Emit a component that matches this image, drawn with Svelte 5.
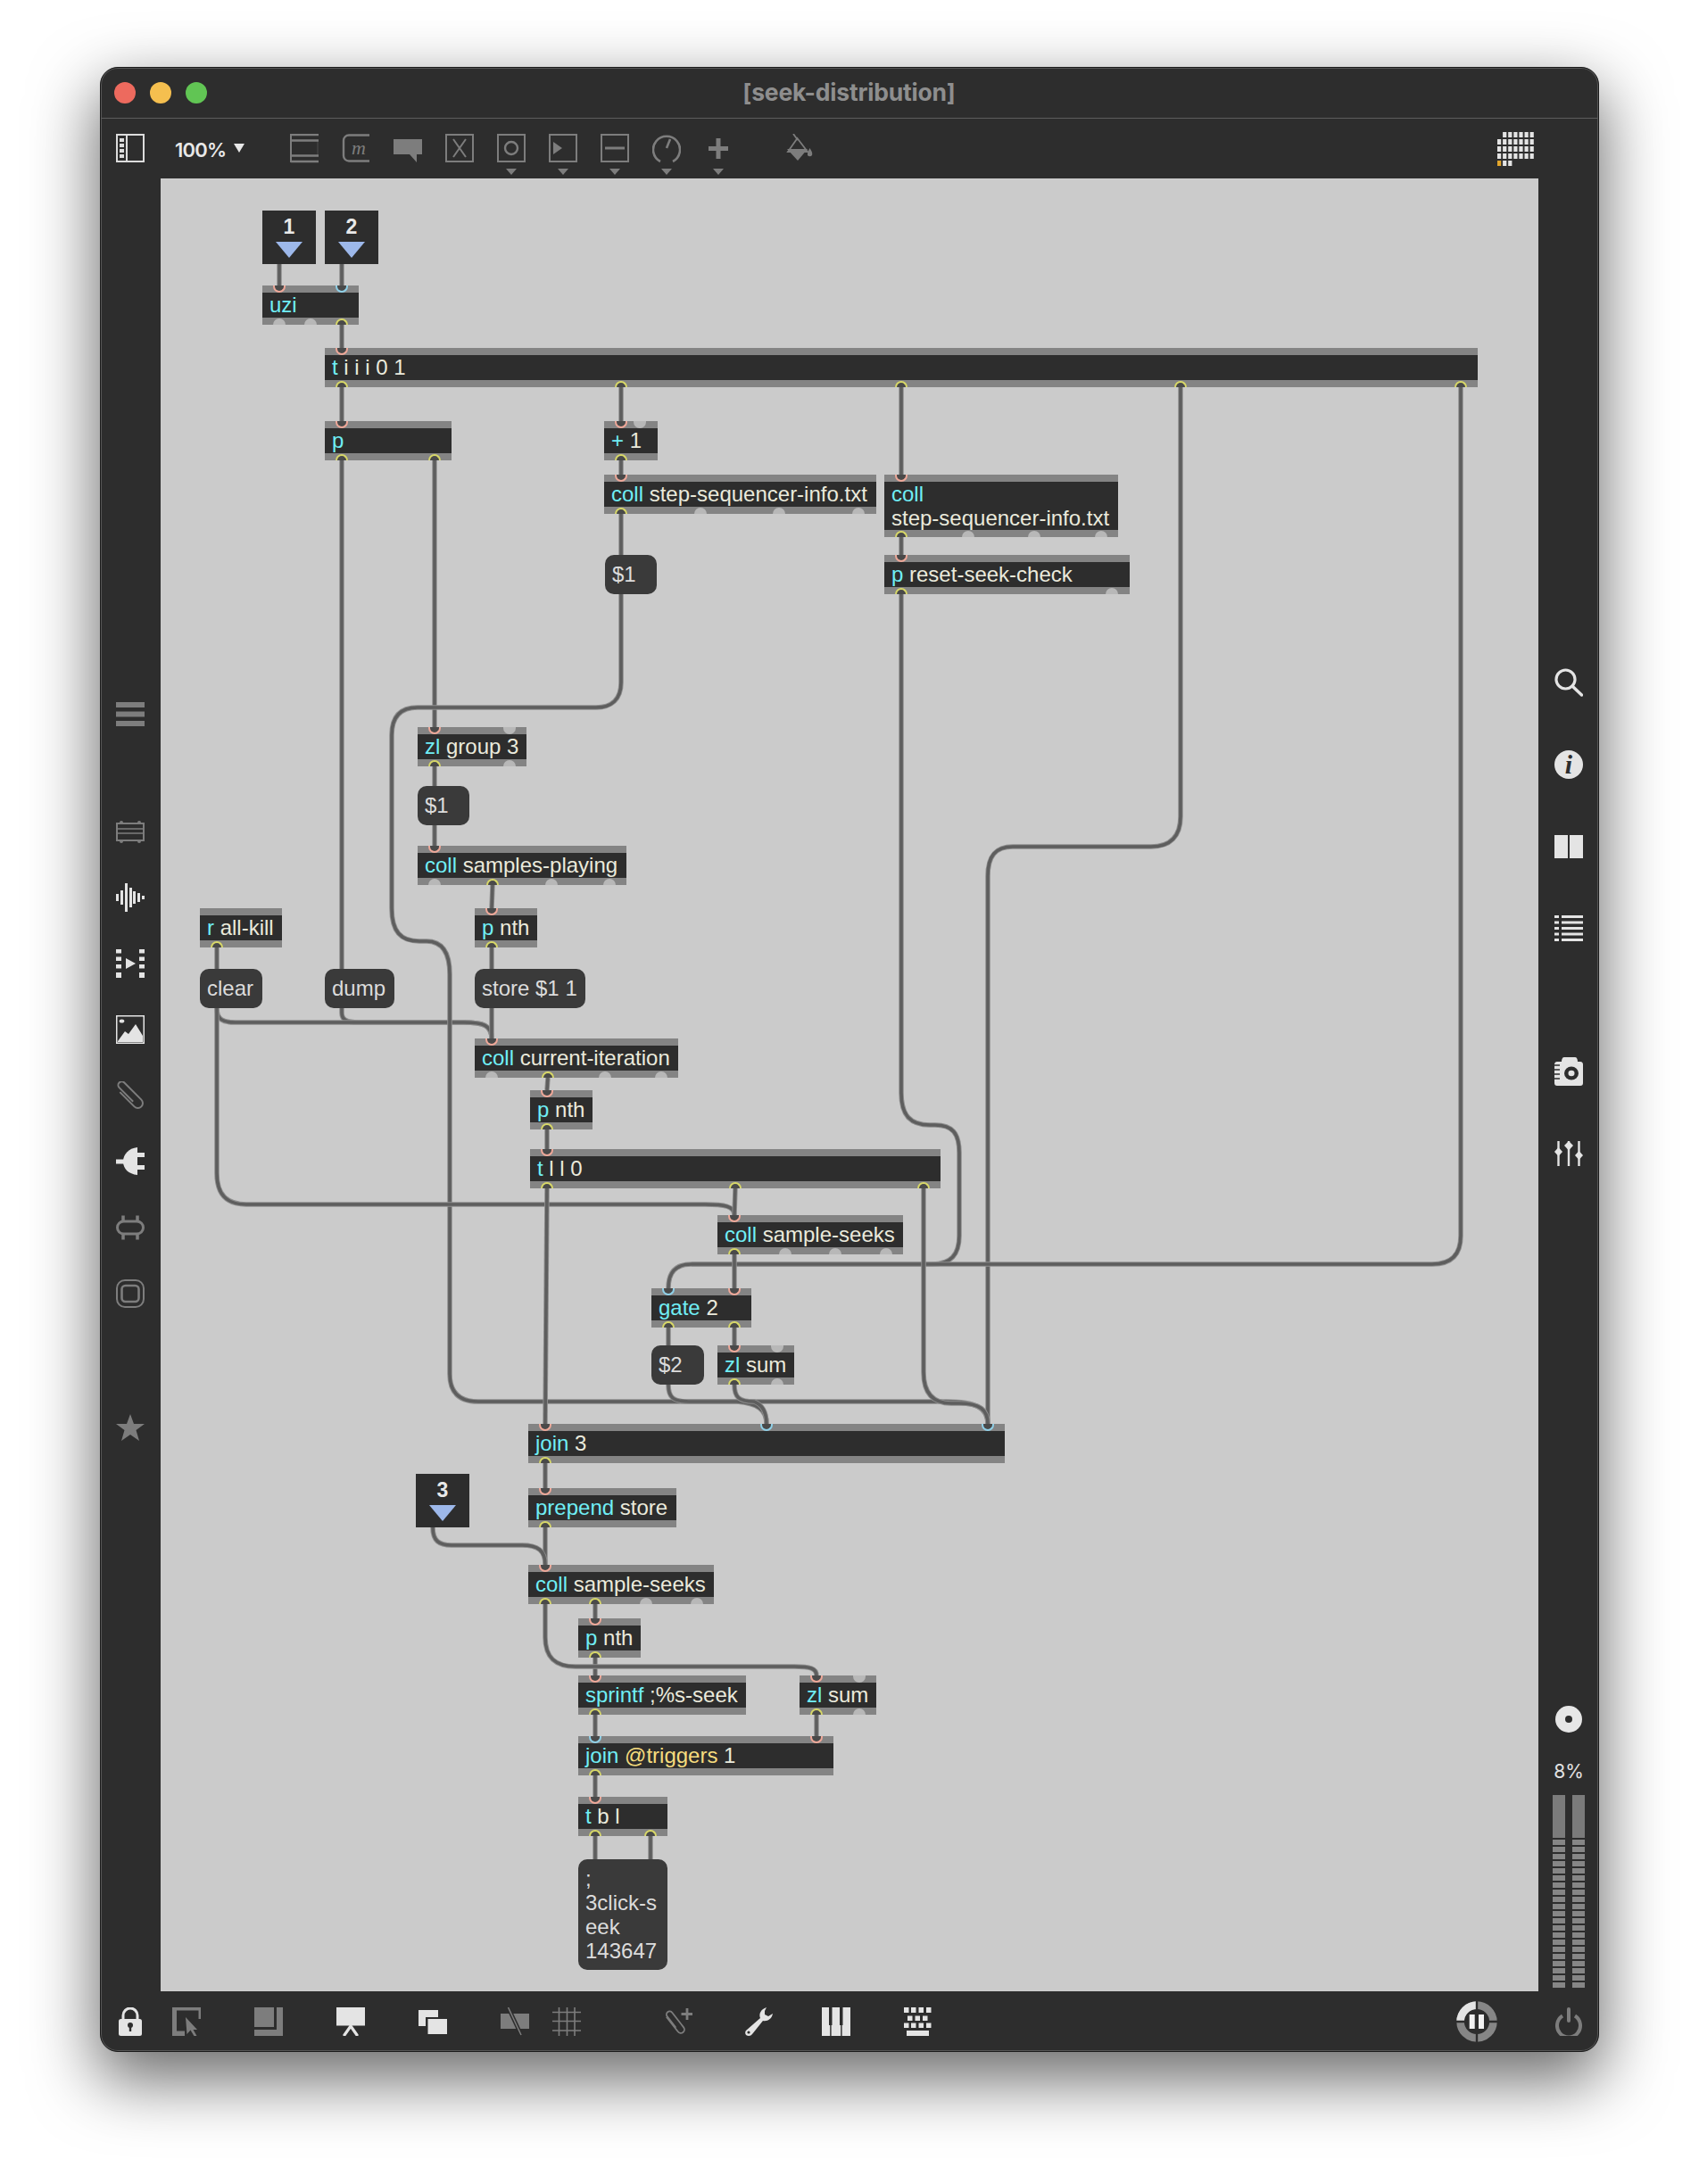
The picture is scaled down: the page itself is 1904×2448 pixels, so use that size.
<script>
  const OX = 180, OY = 200;
  const H = 44;
  // kind: o = object box, m = message. parts: [text, colour class]
  const nodes = [
    { x: 294, y: 320, w: 108, parts: [['uzi', 'c']], ins: [[313, 'r'], [383, 'b']], outs: [[313, 'g'], [348, 'g'], [383, 'y']] },
    { x: 364, y: 390, w: 1292, parts: [['t', 'c'], [' i i i 0 1', '']], ins: [[383, 'r']], outs: [[383, 'y'], [696, 'y'], [1010, 'y'], [1323, 'y'], [1637, 'y']] },
    { x: 364, y: 472, w: 142, parts: [['p', 'c']], ins: [[383, 'r']], outs: [[383, 'y'], [487, 'y']] },
    { x: 677, y: 472, w: 60, parts: [['+', 'c'], [' 1', '']], ins: [[696, 'r'], [717, 'g']], outs: [[696, 'y']] },
    { x: 677, y: 532, w: 305, parts: [['coll', 'c'], [' step-sequencer-info.txt', '']], ins: [[696, 'r']], outs: [[696, 'y'], [785, 'g'], [873, 'g'], [962, 'g']] },
    { x: 991, y: 532, w: 262, h: 70, two: true, parts: [['coll', 'c'], ['\nstep-sequencer-info.txt', '']], ins: [[1010, 'r']], outs: [[1010, 'y'], [1085, 'g'], [1159, 'g'], [1234, 'g']] },
    { x: 991, y: 622, w: 275, parts: [['p', 'c'], [' reset-seek-check', '']], ins: [[1010, 'r']], outs: [[1010, 'y'], [1246, 'g']] },
    { x: 678, y: 622, w: 58, msg: true, parts: [['$1', '']] },
    { x: 468, y: 815, w: 122, parts: [['zl', 'c'], [' group 3', '']], ins: [[487, 'r'], [571, 'g']], outs: [[487, 'y'], [571, 'g']] },
    { x: 468, y: 881, w: 58, msg: true, parts: [['$1', '']] },
    { x: 468, y: 948, w: 234, parts: [['coll', 'c'], [' samples-playing', '']], ins: [[487, 'r']], outs: [[487, 'g'], [552, 'y'], [618, 'g'], [683, 'g']] },
    { x: 224, y: 1018, w: 92, parts: [['r', 'c'], [' all-kill', '']], ins: [], outs: [[243, 'y']] },
    { x: 532, y: 1018, w: 70, parts: [['p', 'c'], [' nth', '']], ins: [[551, 'r']], outs: [[551, 'y']] },
    { x: 224, y: 1086, w: 70, msg: true, parts: [['clear', '']] },
    { x: 364, y: 1086, w: 78, msg: true, parts: [['dump', '']] },
    { x: 532, y: 1086, w: 124, msg: true, parts: [['store $1 1', '']] },
    { x: 532, y: 1164, w: 228, parts: [['coll', 'c'], [' current-iteration', '']], ins: [[551, 'r']], outs: [[551, 'g'], [614, 'y'], [678, 'g'], [741, 'g']] },
    { x: 594, y: 1222, w: 70, parts: [['p', 'c'], [' nth', '']], ins: [[613, 'r']], outs: [[613, 'y']] },
    { x: 594, y: 1288, w: 460, parts: [['t', 'c'], [' l l 0', '']], ins: [[613, 'r']], outs: [[613, 'y'], [824, 'y'], [1035, 'y']] },
    { x: 804, y: 1362, w: 208, parts: [['coll', 'c'], [' sample-seeks', '']], ins: [[823, 'r']], outs: [[823, 'y'], [880, 'g'], [936, 'g'], [993, 'g']] },
    { x: 730, y: 1444, w: 112, parts: [['gate', 'c'], [' 2', '']], ins: [[749, 'b'], [823, 'r']], outs: [[749, 'y'], [823, 'y']] },
    { x: 730, y: 1508, w: 59, msg: true, parts: [['$2', '']] },
    { x: 804, y: 1508, w: 86, parts: [['zl', 'c'], [' sum', '']], ins: [[823, 'r'], [871, 'g']], outs: [[823, 'y'], [871, 'g']] },
    { x: 592, y: 1596, w: 534, parts: [['join', 'c'], [' 3', '']], ins: [[611, 'r'], [859, 'b'], [1107, 'b']], outs: [[611, 'y']] },
    { x: 592, y: 1668, w: 166, parts: [['prepend', 'c'], [' store', '']], ins: [[611, 'r']], outs: [[611, 'y']] },
    { x: 592, y: 1754, w: 208, parts: [['coll', 'c'], [' sample-seeks', '']], ins: [[611, 'r']], outs: [[611, 'y'], [667, 'y'], [724, 'g'], [781, 'g']] },
    { x: 648, y: 1814, w: 70, parts: [['p', 'c'], [' nth', '']], ins: [[667, 'r']], outs: [[667, 'y']] },
    { x: 648, y: 1878, w: 188, parts: [['sprintf', 'c'], [' ;%s-seek', '']], ins: [[667, 'r']], outs: [[667, 'y']] },
    { x: 896, y: 1878, w: 86, parts: [['zl', 'c'], [' sum', '']], ins: [[915, 'r'], [963, 'g']], outs: [[915, 'y'], [963, 'g']] },
    { x: 648, y: 1946, w: 286, parts: [['join', 'c'], [' @triggers', 'a'], [' 1', '']], ins: [[667, 'b'], [915, 'r']], outs: [[667, 'y']] },
    { x: 648, y: 2014, w: 100, parts: [['t', 'c'], [' b l', '']], ins: [[667, 'r']], outs: [[667, 'y'], [729, 'y']] },
    { x: 648, y: 2084, w: 100, h: 124, msg: true, two: true, parts: [[';\n3click-s\neek\n143647', '']] }
  ];

  const inlets = [
    { x: 294, y: 236, n: '1' },
    { x: 364, y: 236, n: '2' },
    { x: 466, y: 1652, n: '3' }
  ];

  const cords = [
    'M313 296V320', 'M383 296V320', 'M383 364V390', 'M383 434V472',
    'M383 516V1086',
    'M383 1130V1135C383 1143 388 1146 402 1146H520C541 1146 551 1149 551 1164',
    'M243 1130C243 1143 250 1146 264 1146H520C541 1146 551 1149 551 1164',
    'M487 516V815', 'M696 434V472', 'M696 516V532', 'M696 576V622',
    'M696 666V765C696 784 685 793 668 793H468C448 793 439 804 439 824V1018C439 1044 449 1055 470 1055H478C496 1055 504 1068 504 1092V1540C504 1561 515 1571 536 1571H1060C1094 1571 1107 1578 1107 1596',
    'M1010 434V532', 'M1010 602V622',
    'M1010 666V1225C1010 1250 1020 1261 1042 1261H1048C1067 1261 1075 1270 1075 1292V1385C1075 1407 1065 1417 1045 1417H775C757 1417 749 1426 749 1444',
    'M1323 434V915C1323 938 1311 949 1290 949H1135C1115 949 1107 960 1107 982V1596',
    'M1637 434V1385C1637 1407 1626 1417 1605 1417H775',
    'M487 859V881', 'M487 925V948', 'M552 992L551 1018', 'M551 1062V1086', 'M551 1130V1164',
    'M614 1208L613 1222', 'M613 1266V1288', 'M243 1062V1086',
    'M243 1130V1315C243 1339 254 1350 276 1350H790C812 1350 823 1352 823 1362',
    'M613 1332L611 1596', 'M824 1332L823 1362', 'M823 1406V1444', 'M749 1488V1508', 'M823 1488V1508',
    'M749 1552C749 1566 754 1571 772 1571H826C849 1573 859 1580 859 1596',
    'M823 1552C823 1566 828 1571 845 1571C853 1574 859 1582 859 1596',
    'M1035 1332V1538C1035 1561 1045 1573 1066 1573H1075C1098 1573 1107 1580 1107 1596',
    'M611 1640V1668', 'M611 1712V1754',
    'M485 1712C485 1727 492 1732 506 1732H585C603 1732 611 1738 611 1754',
    'M667 1798V1814', 'M667 1858V1878',
    'M611 1798V1835C611 1858 622 1868 645 1868H890C908 1868 915 1870 915 1878',
    'M667 1922V1946', 'M915 1922V1946', 'M667 1990V2014', 'M667 2058V2084', 'M729 2058V2084'
  ];

  const gridRows = [
    [1, 2, 3, 4, 5, 6], [0, 1, 2, 3, 4, 5, 6], [0, 1, 2, 3, 4, 5, 6], [0, 1, 2, 3, 4, 5, 6], [0, 1, 2]
  ];
  const segs = Array.from({ length: 21 }, (_, i) => i);
</script>

<div class="window">
  <header class="titlebar">
    <div class="lights">
      <span class="light red"></span>
      <span class="light amber"></span>
      <span class="light green"></span>
    </div>
    <div class="title">[seek-distribution]</div>
    <div></div>
  </header>

  <div class="toolbar">
    <svg class="tool light-ico" viewBox="0 0 32 48">
      <rect x="1" y="1" width="30" height="30" fill="none" stroke="currentColor" stroke-width="2" />
      <rect x="11" y="1" width="2" height="30" fill="currentColor" />
      <rect x="4" y="5" width="5" height="4" fill="currentColor" />
      <rect x="4" y="11" width="5" height="4" fill="currentColor" />
      <rect x="4" y="17" width="5" height="4" fill="currentColor" />
      <rect x="4" y="23" width="5" height="4" fill="currentColor" />
    </svg>
    <div class="zoomlevel">100%<span class="zoomarrow"></span></div>

    <svg class="tool first" viewBox="0 0 32 48">
      <path d="M1 0V32" stroke="currentColor" stroke-width="2" />
      <path d="M1 1H32M1 7.5H32M1 24.5H32M1 31H32" stroke="currentColor" stroke-width="2.6" />
      <path d="M31 8V24" stroke="currentColor" stroke-width="1" opacity=".4" />
    </svg>
    <svg class="tool" viewBox="0 0 32 48">
      <path d="M31 1.5H8a6 6 0 0 0-6 6v17a6 6 0 0 0 6 6h23" fill="none" stroke="currentColor" stroke-width="2.4" />
      <text x="11" y="23" class="italic-m">m</text>
    </svg>
    <svg class="tool" viewBox="0 0 32 48"><path d="M0 6H32V23H26V32L18 23H0Z" fill="currentColor" /></svg>
    <svg class="tool" viewBox="0 0 32 48">
      <rect x="1" y="1" width="30" height="30" fill="none" stroke="currentColor" stroke-width="2" />
      <path d="M9 6L23 26M23 6L9 26" stroke="currentColor" stroke-width="2" />
    </svg>
    <svg class="tool" viewBox="0 0 32 48">
      <rect x="1" y="1" width="30" height="30" fill="none" stroke="currentColor" stroke-width="2" />
      <circle cx="16" cy="16" r="7" fill="none" stroke="currentColor" stroke-width="2.4" />
      <path d="M10 39H22L16 46Z" fill="currentColor" />
    </svg>
    <svg class="tool" viewBox="0 0 32 48">
      <rect x="1" y="1" width="30" height="30" fill="none" stroke="currentColor" stroke-width="2" />
      <path d="M5 9L15 16L5 23Z" fill="currentColor" />
      <path d="M10 39H22L16 46Z" fill="currentColor" />
    </svg>
    <svg class="tool" viewBox="0 0 32 48">
      <rect x="1" y="1" width="30" height="30" fill="none" stroke="currentColor" stroke-width="2" />
      <rect x="5" y="14.5" width="22" height="3" fill="currentColor" />
      <path d="M10 39H22L16 46Z" fill="currentColor" />
    </svg>
    <svg class="tool" viewBox="0 0 32 48">
      <path d="M9 31A15 15 0 1 1 23 31" fill="none" stroke="currentColor" stroke-width="2.6" />
      <path d="M16 16L20 6" stroke="currentColor" stroke-width="2.6" />
      <path d="M10 39H22L16 46Z" fill="currentColor" />
    </svg>
    <svg class="tool" viewBox="0 0 32 48">
      <path d="M16 5V28M5 16.5H27" stroke="currentColor" stroke-width="5" />
      <path d="M10 39H22L16 46Z" fill="currentColor" />
    </svg>
    <svg class="tool bucket" viewBox="0 0 32 48">
      <path d="M9 0L14 7M13.5 5L25 20H3Z" fill="none" stroke="currentColor" stroke-width="1.8" />
      <path d="M2 17H25L14 30Z" fill="currentColor" />
      <path d="M27.5 16C29 19 31 21 30 24A3 3 0 0 1 25 24C24.5 21 26 19 27.5 16Z" fill="currentColor" />
    </svg>
    <svg class="gridicon" viewBox="0 0 41 38">
      {#each gridRows as row, r}
        {#each row as c}
          <rect x={c * 6.1} y={r * 8} width="4.2" height="6" fill={r === 4 && c === 0 ? '#e3a62c' : '#e4e4e4'} />
        {/each}
      {/each}
    </svg>
  </div>

  <div class="middle">
    <aside class="side left">
      <svg class="ico dim" viewBox="0 0 32 32">
        <rect y="3" width="32" height="6" fill="currentColor" /><rect y="13.5" width="32" height="6" fill="currentColor" /><rect y="24" width="32" height="6" fill="currentColor" />
      </svg>
      <svg class="ico dim gap-group" viewBox="0 0 32 32">
        <rect x="1" y="7" width="30" height="19" fill="none" stroke="currentColor" stroke-width="2" />
        <path d="M2 13H30M2 18H30" stroke="currentColor" stroke-width="1.5" />
        <circle cx="6" cy="6" r="2" fill="currentColor" /><circle cx="26" cy="6" r="2" fill="currentColor" />
        <circle cx="6" cy="27" r="2" fill="currentColor" /><circle cx="26" cy="27" r="2" fill="currentColor" />
      </svg>
      <svg class="ico bright" viewBox="0 0 32 32">
        <rect x="0" y="12" width="3" height="8" fill="currentColor" /><rect x="5" y="8" width="3" height="16" fill="currentColor" />
        <rect x="10" y="0" width="3" height="32" fill="currentColor" /><rect x="15" y="5" width="3" height="22" fill="currentColor" />
        <rect x="19" y="9" width="3" height="14" fill="currentColor" /><rect x="24" y="11" width="3" height="10" fill="currentColor" />
        <rect x="29" y="14" width="3" height="4" fill="currentColor" />
      </svg>
      <svg class="ico bright" viewBox="0 0 32 32">
        <path d="M0 0H6V4.5H0ZM0 8.5H6V13H0ZM0 17H6V21.5H0ZM0 26H6V32H0ZM26 0H32V4.5H26ZM26 8.5H32V13H26ZM26 17H32V21.5H26ZM26 26H32V32H26Z" fill="currentColor" />
        <path d="M11 10L22 16L11 22Z" fill="currentColor" />
      </svg>
      <svg class="ico bright" viewBox="0 0 32 32">
        <rect x=".75" y=".75" width="30.5" height="30.5" fill="none" stroke="currentColor" stroke-width="1.5" />
        <path d="M2 29L10 18L14 21L22 10L30 23V30H2Z" fill="currentColor" />
        <ellipse cx="6.5" cy="6.5" rx="2.8" ry="2" fill="currentColor" />
      </svg>
      <svg class="ico dim" viewBox="0 0 32 32">
        <g transform="rotate(-45 16 16)">
          <path d="M10.5 5V28a5.500 5.500 0 0 0 11 0V1a4 4 0 0 0-8 0V23" fill="none" stroke="currentColor" stroke-width="2" />
        </g>
      </svg>
      <svg class="ico bright" viewBox="0 0 32 32">
        <rect x="0" y="13.5" width="9" height="5" fill="currentColor" />
        <path d="M8 16C8 8 14 1 24 0V31C14 30 8 24 8 16Z" fill="currentColor" />
        <rect x="24" y="6" width="8" height="5" fill="currentColor" /><rect x="24" y="20" width="8" height="5" fill="currentColor" />
      </svg>
      <svg class="ico dim" viewBox="0 0 32 32">
        <rect x="1.5" y="9" width="29" height="14" rx="7" fill="none" stroke="currentColor" stroke-width="3" />
        <path d="M8 2.5V9M24 2.5V9M8 23V29.5M24 23V29.5" stroke="currentColor" stroke-width="3.5" />
      </svg>
      <svg class="ico dim" viewBox="0 0 32 32">
        <rect x="1" y="1" width="30" height="30" rx="9" fill="none" stroke="currentColor" stroke-width="2" />
        <rect x="6.5" y="7" width="19" height="18" rx="4" fill="none" stroke="currentColor" stroke-width="2.6" />
      </svg>
      <svg class="ico dim gap-star" viewBox="0 0 32 32">
        <path d="M16 1L20 12H32L22.5 19L26 31L16 24L6 31L9.5 19L0 12H12Z" fill="currentColor" />
      </svg>
    </aside>

    <main class="canvas">
      <svg class="cords" viewBox="{OX} {OY} 1544 2032">
        {#each cords as d}
          <path {d} class="cord-edge" />
          <path {d} class="cord" />
        {/each}
      </svg>

      {#each inlets as p}
        <div class="inlet" style="left:{p.x - OX}px;top:{p.y - OY}px">
          <span class="inlet-num">{p.n}</span>
          <span class="inlet-tri"></span>
        </div>
      {/each}

      {#each nodes as n}
        <div class="node" class:msg={n.msg} class:two={n.two}
          style="left:{n.x - OX}px;top:{n.y - OY}px;width:{n.w}px;height:{n.h ?? H}px">
          <span class="label">{#each n.parts as part}<span class={part[1]}>{part[0]}</span>{/each}</span>
          {#each n.ins ?? [] as port}
            <i class="port in {port[1]}" style="left:{port[0] - n.x - 7}px"></i>
          {/each}
          {#each n.outs ?? [] as port}
            <i class="port out {port[1]}" style="left:{port[0] - n.x - 7}px"></i>
          {/each}
        </div>
      {/each}
    </main>

    <aside class="side right">
      <svg class="ico bright" viewBox="0 0 32 32">
        <circle cx="12.5" cy="12.5" r="10.5" fill="none" stroke="currentColor" stroke-width="3.2" />
        <path d="M20 20L30.5 30" stroke="currentColor" stroke-width="3.4" stroke-linecap="round" />
      </svg>
      <svg class="ico bright" viewBox="0 0 32 32">
        <circle cx="16" cy="16" r="16" fill="currentColor" />
        <text x="16" y="26" class="info-i" text-anchor="middle">i</text>
      </svg>
      <svg class="ico bright" viewBox="0 0 32 32">
        <rect y="3" width="15" height="26" fill="currentColor" /><rect x="17" y="3" width="15" height="26" fill="currentColor" />
      </svg>
      <svg class="ico bright" viewBox="0 0 32 32">
        <path d="M0 2.5H5M8 2.5H32M0 9H5M8 9H32M0 15.5H5M8 15.5H32M0 22H5M8 22H32M0 28.500H5M8 28.500H32" stroke="currentColor" stroke-width="3" />
      </svg>
      <svg class="ico bright gap-cam" viewBox="0 0 32 32">
        <path d="M3 5H8C8 2 9 0 11 0H23C25 0 26 2 26 5H29C31 5 32 6.500 32 8V29C32 31 31 32 29 32H3C1 32 0 31 0 29V8C0 6.500 1 5 3 5Z" fill="currentColor" />
        <ellipse cx="19" cy="18" rx="8" ry="7.500" fill="#2d2d2d" />
        <ellipse cx="19" cy="18" rx="3.500" ry="3.200" fill="currentColor" />
        <path d="M0 9H6M0 14H6M0 19H6M0 24H6" stroke="#2d2d2d" stroke-width="1.500" />
      </svg>
      <svg class="ico bright" viewBox="0 0 32 32">
        <path d="M4.500 2V30M16 2V30M27.500 2V30" stroke="currentColor" stroke-width="2.400" />
        <path d="M4.500 9L9 14L4.500 19L0 14Z" fill="currentColor" />
        <path d="M16 2L21 7L16 12.500L11 7Z" fill="currentColor" />
        <path d="M27.500 13L32 18L27.500 23L23 18Z" fill="currentColor" />
      </svg>

      <div class="status">
        <svg class="disc" viewBox="0 0 30 30">
          <circle cx="15" cy="15" r="15" fill="#e6e6e6" /><circle cx="15" cy="15" r="4" fill="#2d2d2d" />
        </svg>
        <div class="cpu">8%</div>
        <div class="meters">
          {#each [0, 1] as m}
            <div class="meter">
              <div class="meter-top"></div>
              {#each segs as s (s)}<div class="seg"></div>{/each}
            </div>
          {/each}
        </div>
      </div>
    </aside>
  </div>

  <footer class="bottombar">
    <svg class="ico bright" viewBox="0 0 32 32">
      <path d="M8 14V9A8 8 0 0 1 24 9V14" fill="none" stroke="currentColor" stroke-width="3" />
      <rect x="3" y="13" width="26" height="19" rx="2.500" fill="currentColor" />
      <circle cx="16" cy="20" r="3" fill="#2d2d2d" /><rect x="14.800" y="20" width="2.400" height="7" fill="#2d2d2d" />
    </svg>
    <svg class="ico dim ml31" viewBox="0 0 32 32">
      <path d="M0 0H32V13H29.500V3.500H5V26.500H14V32H0Z" fill="currentColor" />
      <path d="M15 11L28 25L23.500 25L27.500 32L25 33L20.500 25.500L16.500 30Z" fill="currentColor" />
    </svg>
    <svg class="ico dim ml60" viewBox="0 0 32 32">
      <rect width="22" height="22" fill="currentColor" />
      <path d="M25 0H32V32H0V25H25Z" fill="currentColor" />
    </svg>
    <svg class="ico bright ml60" viewBox="0 0 32 32">
      <rect width="32" height="20.500" fill="currentColor" />
      <path d="M16 21L9 31M16 21L23 31" stroke="currentColor" stroke-width="3.200" stroke-linecap="round" fill="none" />
    </svg>
    <svg class="ico bright ml60" viewBox="0 0 32 32">
      <rect y="3" width="22" height="18" fill="currentColor" />
      <rect x="8" y="11" width="25" height="20.500" fill="#2d2d2d" />
      <rect x="10.500" y="13" width="21.500" height="17" fill="currentColor" />
    </svg>
    <svg class="ico dim ml60" viewBox="0 0 32 32">
      <rect y="7" width="32" height="17" fill="currentColor" />
      <path d="M8.500 0L23 31" stroke="#2d2d2d" stroke-width="4.500" />
      <path d="M8.500 0L23 31" stroke="currentColor" stroke-width="1.500" />
    </svg>
    <svg class="ico dim ml26" viewBox="0 0 32 32">
      <path d="M7.500 0V32M16.500 0V32M25 0V32M0 5.500H32M0 15.500H32M0 26H32" stroke="currentColor" stroke-width="1.600" />
    </svg>
    <svg class="ico dim ml93" viewBox="0 0 32 32">
      <g transform="rotate(-38 13 18)">
        <path d="M9.500 6V27a4 4 0 0 0 8 0V6a3.500 3.500 0 0 0-7 0V22" fill="none" stroke="currentColor" stroke-width="1.800" />
      </g>
      <path d="M26 1V14M19.500 7.500H32.500" stroke="currentColor" stroke-width="2.800" />
    </svg>
    <svg class="ico bright ml58" viewBox="0 0 32 32">
      <path d="M25 0C19 2 16 7 18 12L2 26C0 29 2 32 5 32C7 32 8 31 9 30L21 15C26 16 31 13 32 7L27 10L23 8L23 4Z" fill="currentColor" />
      <circle cx="5" cy="28" r="1.600" fill="#2d2d2d" />
    </svg>
    <svg class="ico bright ml55" viewBox="0 0 32 32">
      <rect width="32" height="32" fill="currentColor" />
      <rect x="8" width="3.500" height="20" fill="#2d2d2d" /><rect x="20" width="3.500" height="20" fill="#2d2d2d" />
      <rect x="9.200" y="19" width="1.400" height="13" fill="#2d2d2d" /><rect x="21.200" y="19" width="1.400" height="13" fill="#2d2d2d" />
    </svg>
    <svg class="ico bright ml60" viewBox="0 0 32 32">
      <path d="M0 0H5.500V6H0ZM8 0H13.500V6H8ZM16.500 0H22V6H16.500ZM25 0H30.500V6H25ZM4 9.500H9.500V15H4ZM12.500 9.500H18V15H12.500ZM21 9.500H26.500V15H21ZM0 17.500H5.500V23H0ZM8 17.500H13.500V23H8ZM16.500 17.500H22V23H16.500ZM25 17.500H30.500V23H25ZM3 26H28V32H3Z" fill="currentColor" />
    </svg>

    <svg class="ring" viewBox="0 0 46 46">
      <circle cx="23" cy="23" r="18.400" fill="none" stroke="#868686" stroke-width="8.600" />
      <path d="M23 4.600A18.400 18.400 0 0 0 4.600 23" fill="none" stroke="#e4e4e4" stroke-width="8.600" />
      <path d="M23 0V46M0 23H46" stroke="#2d2d2d" stroke-width="2.400" />
      <rect x="14.700" y="15" width="6" height="16" fill="#f2f2f2" /><rect x="25" y="15" width="6" height="16" fill="#f2f2f2" />
    </svg>
    <svg class="ico dim power" viewBox="0 0 32 32">
      <path d="M9 9.500A13 13 0 1 0 23 9.500" fill="none" stroke="currentColor" stroke-width="4" />
      <path d="M16 2V15" stroke="currentColor" stroke-width="4" stroke-linecap="round" />
    </svg>
  </footer>
</div>

<style>
  :global(body) {
    margin: 0;
    background: #fff;
    font-family: "Liberation Sans", Arial, sans-serif;
  }

  :global(#app) {
    height: 2448px;
    overflow: hidden;
    padding-top: 75px;
    box-sizing: border-box;
  }

  .window {
    width: 1680px;
    height: 2225px;
    margin-left: 112px;
    box-sizing: border-box;
    display: flex;
    flex-direction: column;
    background: #2d2d2d;
    border: 1px solid #1a1a1a;
    border-radius: 20px;
    box-shadow: 0 28px 72px 4px rgba(0, 0, 0, 0.58), inset 0 0 0 1px #555;
    color: #7d7d7d;
  }

  .titlebar {
    height: 57px;
    box-sizing: border-box;
    flex: none;
    display: grid;
    grid-template-columns: 1fr auto 1fr;
    align-items: center;
    border-bottom: 1px solid #5c5c5c;
    padding-left: 15px;
  }

  .lights {
    display: flex;
    gap: 16px;
  }

  .light {
    width: 24px;
    height: 24px;
    border-radius: 50%;
  }

  .red { background: #ed6a5e; }
  .amber { background: #f5bf4f; }
  .green { background: #61c554; }

  .title {
    font-family: Inter, "Liberation Sans", sans-serif;
    font-weight: 700;
    font-size: 26.500px;
    letter-spacing: -0.2px;
    color: #8e8e8e;
    line-height: 50px;
    margin-top: -3px;
    transform: translateX(-8px);
  }

  .toolbar {
    height: 67px;
    flex: none;
    box-sizing: border-box;
    display: flex;
    align-items: flex-start;
    padding: 17px 0 0 17px;
  }

  .tool {
    width: 32px;
    height: 48px;
    flex: none;
    margin-right: 26px;
  }

  .tool.light-ico {
    color: #dcdcdc;
    margin-right: 34px;
  }

  .tool.first { margin-left: 36px; }
  .tool.bucket { margin-left: 33px; }

  .italic-m {
    font-family: "Liberation Serif", serif;
    font-style: italic;
    font-size: 22px;
    fill: currentColor;
  }

  .zoomlevel {
    font-family: Inter, "Liberation Sans", sans-serif;
    font-size: 22px;
    font-weight: 600;
    color: #e8e8e8;
    line-height: 36px;
    letter-spacing: -0.8px;
    display: flex;
    align-items: center;
    width: 93px;
  }

  .zoomarrow {
    width: 0;
    height: 0;
    margin-left: 9px;
    border-left: 6px solid transparent;
    border-right: 6px solid transparent;
    border-top: 10px solid #e8e8e8;
    margin-top: -4px;
  }

  .gridicon {
    width: 41px;
    height: 38px;
    margin-left: auto;
    margin-right: 72px;
    margin-top: -2px;
  }

  .middle {
    flex: none;
    height: 2032px;
    display: flex;
  }

  .side {
    flex: none;
    width: 67px;
    box-sizing: border-box;
    display: flex;
    flex-direction: column;
    align-items: flex-start;
  }

  .side.left {
    padding: 584px 0 0 17px;
    gap: 42px;
  }

  .side.right {
    padding: 549px 0 4px 18px;
    gap: 60px;
  }

  .ico {
    width: 32px;
    height: 32px;
    flex: none;
    display: block;
  }

  .dim { color: #7d7d7d; }
  .bright { color: #e4e4e4; }
  .gap-group { margin-top: 58px; }
  .gap-star { margin-top: 76px; }
  .gap-cam { margin-top: 68px; }

  .info-i {
    font-family: "Liberation Serif", serif;
    font-style: italic;
    font-weight: 700;
    font-size: 30px;
    fill: #2d2d2d;
  }

  .status {
    margin-top: auto;
    display: flex;
    flex-direction: column;
    align-items: center;
    margin-left: -2px;
    width: 36px;
  }

  .disc {
    width: 30px;
    height: 30px;
    margin-bottom: 30px;
  }

  .cpu {
    font-family: Inter, "Liberation Sans", sans-serif;
    font-size: 21px;
    line-height: 28px;
    color: #e2e2e2;
    white-space: nowrap;
    margin-bottom: 12px;
  }

  .meters {
    display: flex;
    gap: 8px;
  }

  .meter {
    width: 14px;
    display: flex;
    flex-direction: column;
    gap: 2px;
  }

  .meter-top {
    height: 48px;
    background: #7b7b7b;
  }

  .seg {
    height: 6px;
    background: #868686;
  }

  .canvas {
    position: relative;
    width: 1544px;
    height: 2032px;
    flex: none;
    background: #cbcbcb;
    font-size: 24px;
  }

  .cords {
    position: absolute;
    inset: 0;
    width: 1544px;
    height: 2032px;
  }

  .cord, .cord-edge {
    fill: none;
  }

  .cord-edge {
    stroke: #8e8e8e;
    stroke-width: 5.5;
  }

  .cord {
    stroke: #5e5e5e;
    stroke-width: 3.6;
  }

  .inlet {
    position: absolute;
    width: 60px;
    height: 60px;
    background: #2d2d2d;
    display: flex;
    flex-direction: column;
    align-items: center;
  }

  .inlet-num {
    font-weight: 700;
    font-size: 23px;
    line-height: 26px;
    margin-top: 5px;
    color: #e8e8e8;
  }

  .inlet-tri {
    width: 0;
    height: 0;
    margin-top: 4px;
    border-left: 15px solid transparent;
    border-right: 15px solid transparent;
    border-top: 18px solid #9db8ea;
  }

  .node {
    position: absolute;
    box-sizing: border-box;
    background: #2d2d2d;
    border-top: 8px solid #848484;
    border-bottom: 8px solid #848484;
    padding-left: 8px;
    white-space: pre;
    color: #eaeadc;
    line-height: 27px;
  }

  .node.msg {
    background: #3a3a3a;
    border: 0;
    border-radius: 10px;
    padding-top: 8px;
    color: #dcdcdc;
  }

  .label { display: block; }

  .c { color: #70eef5; }
  .a { color: #f6dc7e; }

  .port {
    position: absolute;
    width: 14px;
    height: 7.500px;
    box-sizing: border-box;
    background: #4a4a4a;
    border: 2px solid transparent;
  }

  .port.in {
    top: -8px;
    border-radius: 0 0 7px 7px;
    border-top: 0;
  }

  .port.out {
    bottom: -8px;
    border-radius: 7px 7px 0 0;
    border-bottom: 0;
  }

  .port.r { border-color: #efa899; }
  .port.b { border-color: #8fd0e8; }
  .port.y { border-color: #d8d868; }
  .port.g {
    background: #b8b8b8;
    border-color: #b8b8b8;
  }

  .bottombar {
    flex: none;
    height: 67px;
    display: flex;
    align-items: center;
    padding-left: 17px;
  }

  .ml26 { margin-left: 26px; }
  .ml31 { margin-left: 31px; }
  .ml55 { margin-left: 55px; }
  .ml58 { margin-left: 58px; }
  .ml60 { margin-left: 60px; }
  .ml93 { margin-left: 93px; }

  .ring {
    width: 46px;
    height: 46px;
    margin-left: auto;
    flex: none;
  }

  .power {
    margin-left: 64px;
    margin-right: 17px;
  }
</style>
